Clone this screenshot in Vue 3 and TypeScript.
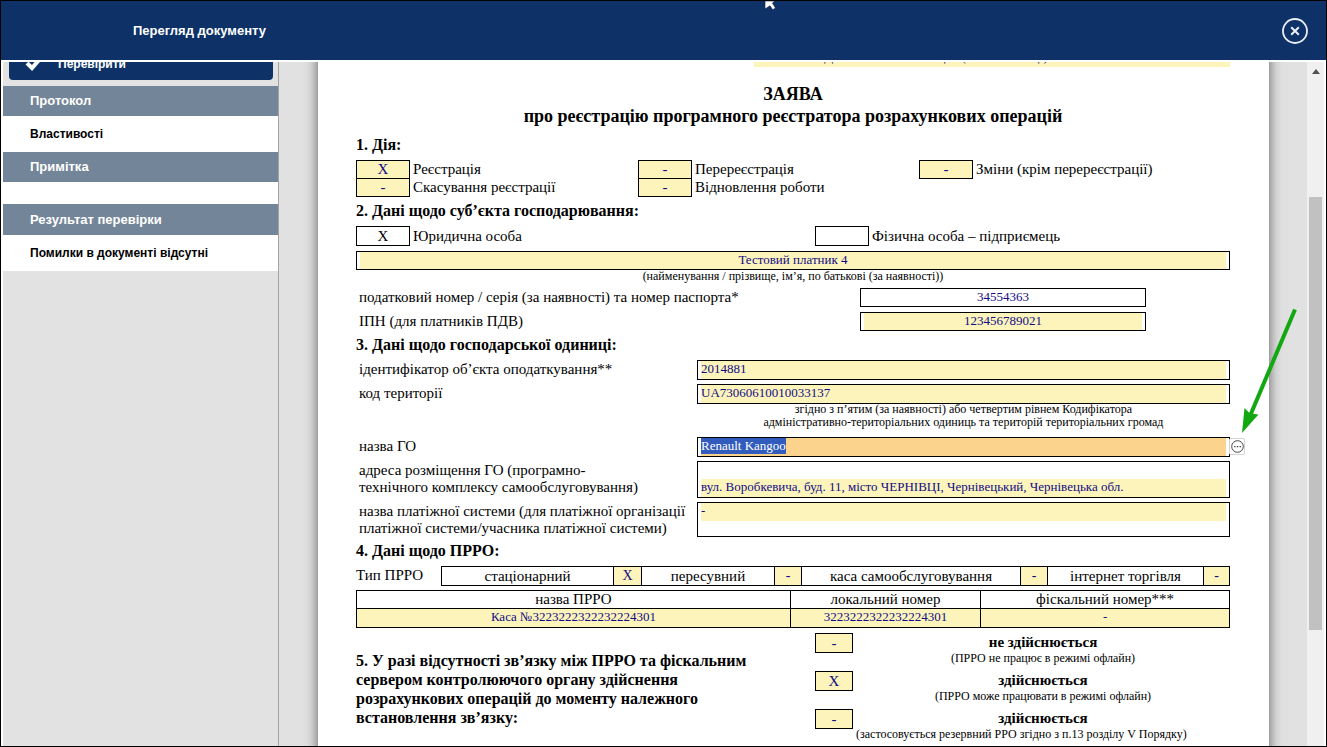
<script setup lang="ts">
import { onMounted, ref } from 'vue'

interface Mark {
  id: string
  value: string
  label: string
}

const actions = ref<Mark[]>([
  { id: 'act-reg', value: 'X', label: 'Реєстрація' },
  { id: 'act-rereg', value: '-', label: 'Перереєстрація' },
  { id: 'act-change', value: '-', label: 'Зміни (крім перереєстрації)' },
  { id: 'act-cancel', value: '-', label: 'Скасування реєстрації' },
  { id: 'act-resume', value: '-', label: 'Відновлення роботи' },
])

const subjects = ref<Mark[]>([
  { id: 'subj-legal', value: 'X', label: 'Юридична особа' },
  { id: 'subj-person', value: '', label: 'Фізична особа – підприємець' },
])

const kinds = ref<Mark[]>([
  { id: 'kind-static', value: 'X', label: 'стаціонарний' },
  { id: 'kind-mobile', value: '-', label: 'пересувний' },
  { id: 'kind-self', value: '-', label: 'каса самообслуговування' },
  { id: 'kind-web', value: '-', label: 'інтернет торгівля' },
])

const offline = ref([
  { id: 'off-none', value: '-', label: 'не здійснюється', hint: '(ПРРО не працює в режимі офлайн)' },
  { id: 'off-prro', value: 'X', label: 'здійснюється', hint: '(ПРРО може працювати в режимі офлайн)' },
  { id: 'off-rro', value: '-', label: 'здійснюється', hint: '(застосовується резервний РРО згідно з п.13 розділу V Порядку)' },
])

const office = ref('ЧЕРНІВ. ПОДАТКОВА ІНСПЕКЦІЯ (М. ЧЕРНІВЦІ)')
const payer = ref('Тестовий платник 4')
const taxNumber = ref('34554363')
const vatNumber = ref('123456789021')
const objectId = ref('2014881')
const territory = ref('UA73060610010033137')
const unitName = ref('Renault Kangoo')
const address = ref('вул. Воробкевича, буд. 11, місто ЧЕРНІВЦІ, Чернівецький, Чернівецька обл.')
const paySystem = ref('-')
const registrar = ref({ name: 'Каса №3223222322232224301', local: '3223222322232224301', fiscal: '-' })

const nameInput = ref<HTMLInputElement | null>(null)
onMounted(() => {
  nameInput.value?.focus({ preventScroll: true })
  nameInput.value?.select()
})
</script>

<template>
  <div class="window">
    <header class="topbar">
      <h1>Перегляд документу</h1>
      <button class="close" type="button" aria-label="Закрити">
        <svg viewBox="0 0 26 26" width="26" height="26" fill="none" stroke="#e9eef6">
          <circle cx="13" cy="13" r="12" stroke-width="1.8" />
          <path d="M9.2 9.2l7.6 7.6M16.8 9.2l-7.6 7.6" stroke-width="2" />
        </svg>
      </button>
      <svg class="pointer" viewBox="0 0 12 10" width="12" height="10">
        <path d="M1 0h9.500L8.500 2.200l3 4.800-2.800 1.800L6 4.800 1 8z" fill="#fff" stroke="#0a1c3c" stroke-width="0.6" />
      </svg>
    </header>

    <div class="body">
      <aside class="sidebar">
        <button class="verify" type="button">
          <svg viewBox="0 0 16 14" width="16" height="14"><path d="M2 6l5 5 7-8" fill="none" stroke="#fff" stroke-width="4" /></svg>
          Перевірити
        </button>
        <h2>Протокол</h2>
        <a href="#properties">Властивості</a>
        <h2>Примітка</h2>
        <div class="note"></div>
        <h2 class="result">Результат перевірки</h2>
        <p>Помилки в документі відсутні</p>
      </aside>

      <main class="viewer">
        <form class="sheet" @submit.prevent>
          <div class="office"><input v-model="office" aria-label="Контролюючий орган" /></div>

          <div class="title">
            <h2>ЗАЯВА</h2>
            <h2>про реєстрацію програмного реєстратора розрахункових операцій</h2>
          </div>

          <h3 class="first">1. Дія:</h3>
          <div class="actions">
            <div v-for="a in actions" :key="a.id" class="mark">
              <input :id="a.id" v-model="a.value" class="cell" />
              <label :for="a.id">{{ a.label }}</label>
            </div>
          </div>

          <h3>2. Дані щодо суб’єкта господарювання:</h3>
          <div class="subjects">
            <div v-for="s in subjects" :key="s.id" class="mark">
              <input :id="s.id" v-model="s.value" class="cell plain" />
              <label :for="s.id">{{ s.label }}</label>
            </div>
          </div>
          <div class="box payer"><input id="payer" v-model="payer" class="center" /></div>
          <label class="hint" for="payer">(найменування / прізвище, ім’я, по батькові (за наявності))</label>
          <div class="row tax">
            <label for="tax">податковий номер / серія (за наявності) та номер паспорта*</label>
            <div class="box white"><input id="tax" v-model="taxNumber" class="center" /></div>
          </div>
          <div class="row tax">
            <label for="vat">ІПН (для платників ПДВ)</label>
            <div class="box"><input id="vat" v-model="vatNumber" class="center" /></div>
          </div>

          <h3>3. Дані щодо господарської одиниці:</h3>
          <div class="row">
            <label for="obj">ідентифікатор об’єкта оподаткування**</label>
            <div class="box"><input id="obj" v-model="objectId" /></div>
          </div>
          <div class="row">
            <label for="terr">код території</label>
            <div class="box"><input id="terr" v-model="territory" /></div>
          </div>
          <p class="hint code">
            згідно з п’ятим (за наявності) або четвертим рівнем Кодифікатора<br />
            адміністративно-територіальних одиниць та територій територіальних громад
          </p>
          <div class="row name">
            <label for="unit">назва ГО</label>
            <div class="box active">
              <input id="unit" ref="nameInput" v-model="unitName" />
              <button class="more" type="button" aria-label="Вибрати">
                <svg viewBox="0 0 13 13" width="13" height="13">
                  <circle cx="6.5" cy="6.500" r="5.800" fill="none" stroke="#444" />
                  <path d="M3.200 6h1.300v1.300h-1.300zM5.900 6h1.300v1.300h-1.300zM8.600 6h1.300v1.300h-1.300z" fill="#333" />
                </svg>
              </button>
              <svg class="arrow" viewBox="0 0 60 128" width="60" height="128">
                <path d="M57 2.500L12 109" stroke="#12a812" stroke-width="4" fill="none" />
                <path d="M4 126L6.500 101 12 106.500 20.500 107.500z" fill="#12a812" />
              </svg>
            </div>
          </div>
          <div class="row tall">
            <label for="addr">адреса розміщення ГО (програмно-<br />технічного комплексу самообслуговування)</label>
            <div class="box bottom"><input id="addr" v-model="address" /></div>
          </div>
          <div class="row tall">
            <label for="pay">назва платіжної системи (для платіжної організації<br />платіжної системи/учасника платіжної системи)</label>
            <div class="box"><input id="pay" v-model="paySystem" /></div>
          </div>

          <h3>4. Дані щодо ПРРО:</h3>
          <div class="kinds">
            <span class="caption">Тип ПРРО</span>
            <template v-for="k in kinds" :key="k.id">
              <label :for="k.id">{{ k.label }}</label>
              <input :id="k.id" v-model="k.value" />
            </template>
          </div>
          <table>
            <thead>
              <tr>
                <th id="c-name">назва ПРРО</th>
                <th id="c-local">локальний номер</th>
                <th id="c-fiscal">фіскальний номер***</th>
              </tr>
            </thead>
            <tbody>
              <tr>
                <td><input v-model="registrar.name" aria-labelledby="c-name" /></td>
                <td><input v-model="registrar.local" aria-labelledby="c-local" /></td>
                <td><input v-model="registrar.fiscal" aria-labelledby="c-fiscal" /></td>
              </tr>
            </tbody>
          </table>

          <div class="offline">
            <h3>5. У разі відсутності зв’язку між ПРРО та фіскальним сервером контролюючого органу здійснення розрахункових операцій до моменту належного встановлення зв’язку:</h3>
            <div class="modes">
              <div v-for="o in offline" :key="o.id" class="mode">
                <input :id="o.id" v-model="o.value" class="cell" />
                <label :for="o.id"><b>{{ o.label }}</b><small>{{ o.hint }}</small></label>
              </div>
            </div>
          </div>
        </form>
      </main>

      <div class="scrollbar" aria-hidden="true">
        <svg viewBox="0 0 8 5" width="8" height="5"><path d="M0 5L4 0l4 5z" fill="#505050" /></svg>
        <div class="thumb"></div>
      </div>
    </div>
  </div>
</template>

<style>
body {
  margin: 0;
  background: #fff;
}
</style>

<style scoped>
* {
  box-sizing: border-box;
}
h1, h2, h3, p {
  margin: 0;
}
.window {
  display: flex;
  flex-direction: column;
  height: 100vh;
  overflow: hidden;
  border: 1px solid #000;
  font-family: "Liberation Sans", Arial, sans-serif;
  color: #000;
}
.topbar {
  position: relative;
  display: flex;
  flex: none;
  align-items: center;
  justify-content: space-between;
  height: 59px;
  padding: 0 18px 0 132px;
  background: #0e3168;
}
.topbar h1 {
  color: #fff;
  font-size: 13px;
  line-height: 20px;
}
.close {
  display: flex;
  padding: 0;
  border: 0;
  background: none;
}
.pointer {
  position: absolute;
  top: 0;
  left: 57.6%;
}
.body {
  display: flex;
  flex: 1;
  min-height: 0;
  padding: 2px 2px 0;
}
.sidebar {
  flex: none;
  width: 276px;
  overflow: hidden;
  border-right: 1px solid #a3a3a3;
  background: #e2e2e2;
  font-size: 12px;
}
.verify {
  display: flex;
  align-items: center;
  gap: 17px;
  width: calc(100% - 11px);
  height: 32px;
  margin: -14px 5px 6px 6px;
  padding: 0 16px;
  border: 0;
  border-radius: 4px;
  background: #0e3168;
  color: #fff;
  font: bold 12px/16px "Liberation Sans", Arial, sans-serif;
}
.sidebar h2 {
  padding-left: 27px;
  background: #738598;
  color: #fff;
  font-size: 13px;
  line-height: 30px;
}
.sidebar .result {
  line-height: 31px;
}
.sidebar a,
.sidebar p {
  display: block;
  padding-left: 27px;
  background: #fff;
  color: #000;
  font-weight: bold;
  line-height: 36px;
  text-decoration: none;
}
.note {
  height: 22px;
  background: #fff;
}
.viewer {
  flex: 1;
  min-width: 0;
  overflow: hidden;
  padding: 0 38px 0 39px;
  background: #e1e1e1;
}
.sheet {
  min-height: 100%;
  padding: 0 39px 12px 38px;
  background: #fff;
  box-shadow: 0 0 12px rgba(0, 0, 0, 0.6);
  font-family: "Liberation Serif", "Times New Roman", serif;
  font-size: 15px;
  line-height: 17px;
}
.sheet input {
  display: block;
  width: 100%;
  min-width: 0;
  height: 18px;
  padding: 0 0 2px;
  border: 0;
  border-radius: 0;
  outline: 0;
  background: #fcf4bb;
  color: #120c85;
  font-family: inherit;
  font-size: 13px;
}
.sheet input::selection {
  background: #315bbd;
  color: #fff;
}
.office {
  width: 54.5%;
  margin: -15px 0 16px auto;
}
.office input {
  height: 20px;
  padding: 0;
}
.title h2 {
  font-size: 18px;
  line-height: 22px;
  text-align: center;
}
.sheet h3 {
  margin: 4px 0 5px;
  font-size: 16px;
  line-height: 20px;
}
.sheet h3.first {
  margin-top: 8px;
}
.actions {
  display: grid;
  grid-template-columns: 282fr 281fr 311fr;
  padding-bottom: 1px;
}
.actions .mark {
  height: 18px;
}
.actions .cell {
  height: 19px;
}
.mark {
  display: flex;
  align-items: center;
  gap: 3px;
}
.sheet .cell {
  flex: none;
  width: 54px;
  padding: 0;
  border: 1px solid #000;
  font-size: 15px;
  text-align: center;
}
.sheet .cell.plain {
  background: #fff;
  color: #000;
}
.subjects {
  display: grid;
  grid-template-columns: 459fr 415fr;
}
.subjects .cell {
  height: 20px;
}
.box {
  position: relative;
  height: 20px;
  padding: 0 3px;
  border: 1px solid #000;
}
.box.white input {
  background: #fff;
}
.box.active input {
  background: #fcd38c;
}
.sheet .center {
  text-align: center;
}
.payer {
  height: 19px;
  margin-top: 5px;
}
.payer input {
  height: 17px;
}
.hint {
  display: block;
  font-size: 12px;
  line-height: 13px;
  text-align: center;
}
.row {
  display: grid;
  grid-template-columns: 341fr 533fr;
  margin-top: 4px;
}
.row > label {
  padding: 1px 3px 0;
  white-space: nowrap;
}
.row.tax {
  grid-template-columns: 504fr 286fr 84fr;
  margin-top: 5px;
}
.tax .box {
  height: 19px;
}
.tax input {
  height: 17px;
}
.hint.code {
  width: 61%;
  margin: -1px 0 0 auto;
}
.row.name {
  margin-top: 8px;
}
.tall .box {
  height: 35px;
}
.tall .box.bottom {
  display: flex;
  align-items: flex-end;
  height: 37px;
}
.more {
  position: absolute;
  top: 0;
  left: 100%;
  display: flex;
  align-items: center;
  justify-content: center;
  width: 16px;
  height: 17px;
  padding: 0;
  border: 1px solid #d5d5d5;
  border-radius: 2px;
  background: #fff;
}
.arrow {
  position: absolute;
  bottom: 21px;
  left: calc(100% + 9px);
}
.kinds {
  display: grid;
  grid-template-columns: 85fr 172fr 28fr 133fr 27fr 219fr 27fr 156fr 27fr;
  text-align: center;
}
.kinds .caption {
  line-height: 19px;
  text-align: left;
}
.kinds label,
.kinds input {
  height: 20px;
  border: 1px solid #000;
  border-right: 0;
  line-height: 18px;
  text-align: center;
}
.sheet .kinds input {
  height: 20px;
  padding: 0;
  font-size: 14px;
}
.kinds input:last-child {
  border-right: 1px solid #000;
}
table {
  width: 100%;
  margin-top: 4px;
  border-collapse: collapse;
  table-layout: fixed;
}
th, td {
  height: 18px;
  padding: 0;
  border: 1px solid #000;
  font-weight: normal;
  line-height: 17px;
}
th:first-child {
  width: 49.7%;
}
th:nth-child(2) {
  width: 21.8%;
}
td input {
  text-align: center;
}
.offline {
  display: grid;
  grid-template-columns: 459fr 415fr;
  align-items: start;
  margin-top: 5px;
}
.offline h3 {
  margin-top: 18px;
  padding-right: 50px;
  line-height: 19px;
}
.mode {
  display: flex;
  gap: 3px;
  height: 38px;
}
.mode .cell {
  width: 38px;
  height: 20px;
}
.mode label {
  display: flex;
  flex: 1;
  flex-direction: column;
  text-align: center;
}
.mode b {
  line-height: 18px;
}
.mode small {
  font-size: 12px;
  line-height: 14px;
}
.mode:last-child small {
  text-align: left;
}
.scrollbar {
  display: flex;
  flex: none;
  flex-direction: column;
  align-items: center;
  width: 17px;
  padding-top: 7px;
  background: #f0f0f0;
}
.thumb {
  flex: none;
  width: 13px;
  height: 64%;
  margin-top: 123px;
  background: #c1c1c1;
}
</style>
